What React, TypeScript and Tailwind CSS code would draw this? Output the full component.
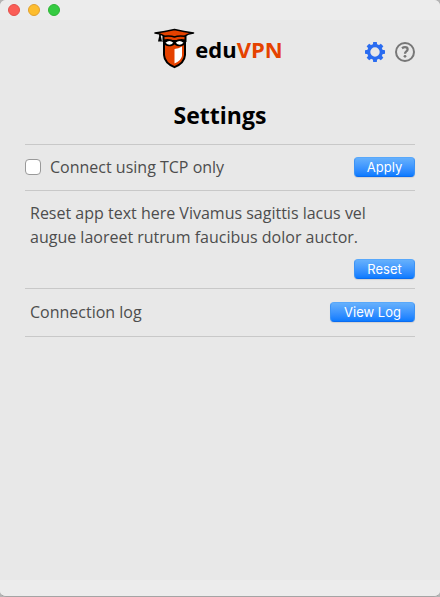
import React from "react";

function TitleBar() {
  return (
    <div className="flex h-5 shrink-0 items-center gap-2 bg-[#ececec] px-2">
      <button type="button" aria-label="Close" className="size-3 rounded-full border border-[#e2514b] bg-[#fb5e57]" />
      <button type="button" aria-label="Minimize" className="size-3 rounded-full border border-[#e0a02f] bg-[#fdbd2e]" />
      <button type="button" aria-label="Zoom" className="size-3 rounded-full border border-[#2fb536] bg-[#35cb42]" />
    </div>
  );
}

function GraduateShield() {
  return (
    <svg width="42" height="42" viewBox="0 0 42 42" aria-hidden="true">
      <path d="M11 13 H32 V27 Q31.5 35 21.5 39.2 Q11.5 35 11 27 Z" fill="#e54200" stroke="#000" strokeWidth="2" strokeLinejoin="round" />
      <path d="M21.5 21 Q25.5 20.5 29 18.5 V28 Q28 32.5 21.5 35.5 Z" fill="#fff" />
      <path d="M10.5 7 H32.5 V13 H10.5 Z" fill="#e54200" stroke="#000" strokeWidth="2" />
      <path d="M10.5 11.5 Q17 10.3 21.5 12.8 Q26 10.3 32.5 11.5 V16 C29 19 24 19 21.5 16.5 C19 19 14 19 10.5 16 Z" fill="#000" />
      <path d="M12.5 14.8 Q16.5 11.2 20.3 14.8 Q16.5 18.6 12.5 14.8 Z M22.7 14.8 Q26.5 11.2 30.5 14.8 Q26.5 18.6 22.7 14.8 Z" fill="#fff" />
      <path d="M2 5 Q12 3.6 21.5 1.5 Q31 3.6 40.5 5 Q35 5.6 31.5 8.2 Q25 7.4 21.5 9 Q18 7.4 11.5 8.2 Q8 5.6 2 5 Z" fill="#e54200" stroke="#000" strokeWidth="1.6" strokeLinejoin="round" />
      <path d="M7 6 V11" stroke="#000" strokeWidth="1.8" />
      <path d="M5 13.5 L6 9 H8 L9 13.5 Z" fill="#000" />
    </svg>
  );
}

function Gear() {
  const teeth = [0, 45, 90, 135, 180, 225, 270, 315];
  return (
    <svg width="20" height="20" viewBox="0 0 20 20" aria-hidden="true">
      <circle cx="10" cy="10" r="6.3" fill="none" stroke="#2a6cf0" strokeWidth="3.2" />
      {teeth.map((angle) => (
        <path key={angle} d="M7.8 3.4 L8.2 0 H11.8 L12.2 3.4 Z" fill="#2a6cf0" transform={`rotate(${angle} 10 10)`} />
      ))}
    </svg>
  );
}

function Help() {
  return (
    <svg width="20" height="20" viewBox="0 0 20 20" aria-hidden="true" fill="none" stroke="#777">
      <circle cx="10" cy="10" r="9" strokeWidth="2" />
      <path d="M7 6.3 Q8.5 5.2 10 5.2 Q12.6 5.2 12.6 7.2 Q12.6 8.5 11.3 9.4 Q10 10.3 10 11.8" strokeWidth="2.3" />
      <circle cx="10" cy="14.3" r="1.4" fill="#777" stroke="none" />
    </svg>
  );
}

function ActionButton({ children, wide = false }: { children: React.ReactNode; wide?: boolean }) {
  return (
    <button
      type="button"
      className={`${wide ? "w-[85px]" : "w-[61px]"} h-5 shrink-0 rounded border border-t-[#58a8fb] border-x-[#3c93f5] border-b-[#0a6cf0] bg-linear-to-b from-[#65b0fc] to-[#0a7bff] font-['Inter',sans-serif] text-[13px] leading-[18px] font-normal text-white shadow-[0_1px_1px_rgba(0,0,0,0.1)]`}
    >
      {children}
    </button>
  );
}

export default function App() {
  return (
    <div className="min-h-screen bg-[#b4b4b4] font-['Open_Sans','Noto_Sans',sans-serif] text-base leading-6 text-[#4d4d4d]">
      <div className="flex min-h-screen flex-col overflow-hidden rounded-md border-b border-[#a4a4a4] bg-[#e8e8e8]">
        <TitleBar />
        <header className="grid grid-cols-[1fr_auto_1fr] items-center px-[25px] pt-2">
          <div className="col-start-2 flex items-center pr-1" role="img" aria-label="eduVPN">
            <GraduateShield />
            <span className="text-[22px] leading-8 font-bold text-black">
              edu<span className="text-[#e54200]">VPN</span>
            </span>
          </div>
          <nav className="flex justify-end gap-2.5 pt-1.5">
            <button type="button" aria-label="Settings"><Gear /></button>
            <button type="button" aria-label="Help"><Help /></button>
          </nav>
        </header>
        <main className="flex-1 px-[25px] pt-[27px]">
          <h1 className="text-center text-[23px] leading-9 font-bold text-black">Settings</h1>
          <div className="mt-[11px] divide-y divide-[#c8c8c8] border-y border-[#c8c8c8]">
            <section className="flex items-center justify-between pt-2.5 pb-[11px]">
              <label className="flex items-center gap-[9px]">
                <input type="checkbox" className="size-4 appearance-none rounded border border-[#999] bg-white checked:bg-[#0a7bff]" />
                Connect using TCP only
              </label>
              <ActionButton>Apply</ActionButton>
            </section>
            <section className="flex flex-col pt-2.5 pb-[9px]">
              <p className="px-[5px]">Reset app text here Vivamus sagittis lacus vel augue laoreet rutrum faucibus dolor auctor.</p>
              <div className="mt-2.5 flex justify-end"><ActionButton>Reset</ActionButton></div>
            </section>
            <section className="flex items-center justify-between pt-[11px] pb-3 pl-[5px]">
              <span>Connection log</span>
              <ActionButton wide>View Log</ActionButton>
            </section>
          </div>
        </main>
        <footer className="h-4 shrink-0 bg-[#ececec]" />
      </div>
    </div>
  );
}
